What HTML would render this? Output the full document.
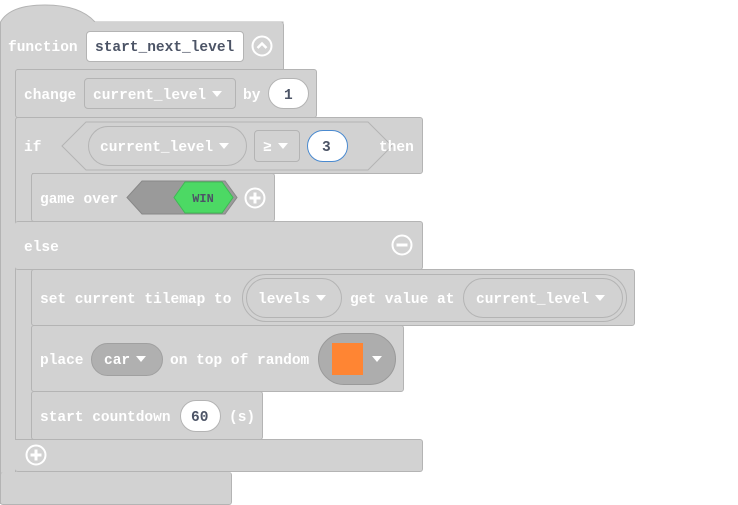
<!DOCTYPE html><html><head><style>
body{margin:0;width:738px;height:504px;background:#fff;position:relative;overflow:hidden;font-family:"Liberation Mono",monospace;font-weight:bold;font-size:14.5px}
.b{position:absolute;background:#d2d2d2;border:1px solid #b4b4b4;box-sizing:border-box;border-radius:3px}
.t{position:absolute;color:#fff;line-height:16px;white-space:pre;margin-top:2px}
.d{color:#4c5466}
.o{position:absolute;box-sizing:border-box;border:1px solid #b4b4b4;border-radius:20px}
.w{background:#fff}
.ar{display:inline-block;width:0;height:0;border-left:5px solid transparent;border-right:5px solid transparent;border-top:6px solid #fff;vertical-align:2px;margin-left:6px}
svg{position:absolute}
</style></head><body>
<svg style="left:0;top:0" width="300" height="30"><path d="M0.5 30 V22 Q10 5 45 5 Q80 5 95 22 H283 V30" fill="#d2d2d2" stroke="#b4b4b4"/></svg>
<div class="b" style="left:0;top:22px;width:284px;height:48px;border-top:none;border-radius:0 3px 0 0"></div>
<div class="b" style="left:0;top:60px;width:17px;height:444px;border-right:none;border-top:none;border-radius:0"></div>
<div class="b" style="left:0;top:472px;width:232px;height:33px;border-top:none"></div>
<div class="t" style="left:8px;top:38px">function</div>
<div class="o w" style="left:86px;top:31px;width:158px;height:31px;border-radius:4px"></div>
<div class="t d" style="left:95px;top:38px">start_next_level</div>
<svg style="left:251px;top:35px" width="22" height="22"><circle cx="11" cy="11" r="9.5" fill="none" stroke="#fff" stroke-width="2"/><path d="M6.5 13 L11 8.5 L15.5 13" stroke="#fff" stroke-width="2.5" fill="none"/></svg>

<div class="b" style="left:15px;top:69px;width:302px;height:49px"></div>
<div class="t" style="left:24px;top:86px">change</div>
<div class="o" style="left:84px;top:78px;width:152px;height:31px;border-radius:4px"></div>
<div class="t" style="left:93px;top:86px">current_level<span class="ar"></span></div>
<div class="t" style="left:243px;top:86px">by</div>
<div class="o w" style="left:268px;top:78px;width:41px;height:31px"></div>
<div class="t d" style="left:284px;top:86px">1</div>

<div class="b" style="left:15px;top:117px;width:408px;height:57px"></div>
<div class="b" style="left:15px;top:170px;width:17px;height:302px;border-radius:0;border-top:none;border-bottom:none;border-right:none"></div>
<div class="t" style="left:24px;top:138px">if</div>
<svg style="left:60px;top:120px" width="340" height="52"><path d="M26 2 H308 L332 26 L308 50 H26 L2 26 Z" fill="#d2d2d2" stroke="#b4b4b4"/></svg>
<div class="o" style="left:88px;top:126px;width:159px;height:40px"></div>
<div class="t" style="left:100px;top:138px">current_level<span class="ar"></span></div>
<div class="o" style="left:254px;top:130px;width:46px;height:32px;border-radius:4px"></div>
<div class="t" style="left:263px;top:138px">≥<span class="ar"></span></div>
<div class="o w" style="left:307px;top:130px;width:41px;height:32px;border-color:#4a8ad0"></div>
<div class="t d" style="left:322px;top:138px">3</div>
<div class="t" style="left:379px;top:138px">then</div>

<div class="b" style="left:31px;top:173px;width:244px;height:49px"></div>
<div class="t" style="left:40px;top:190px">game over</div>
<svg style="left:125px;top:180px" width="115" height="36"><path d="M17 1 H100 L112 17.5 L100 34 H17 L2 17.5 Z" fill="#9a9a9a" stroke="#888"/><path d="M60 2 H97 L108 17.5 L97 33 H60 L49 17.5 Z" fill="#4cd964" stroke="#3fb855"/><text x="78" y="22" text-anchor="middle" font-family="Liberation Mono" font-size="12" fill="#4c5466">WIN</text></svg>
<svg style="left:244px;top:187px" width="22" height="22"><circle cx="11" cy="11" r="9.5" fill="none" stroke="#fff" stroke-width="2"/><path d="M11 5.5 V16.5 M5.5 11 H16.5" stroke="#fff" stroke-width="3"/></svg>

<div class="b" style="left:15px;top:221px;width:408px;height:49px;border-left:none"></div>
<div class="t" style="left:24px;top:238px">else</div>
<svg style="left:391px;top:234px" width="22" height="22"><circle cx="11" cy="11" r="9.5" fill="none" stroke="#fff" stroke-width="2"/><path d="M5.5 11 H16.5" stroke="#fff" stroke-width="3"/></svg>

<div class="b" style="left:31px;top:269px;width:604px;height:57px"></div>
<div class="t" style="left:40px;top:290px">set current tilemap to</div>
<div class="o" style="left:242px;top:274px;width:385px;height:48px;border-radius:24px"></div>
<div class="o" style="left:246px;top:278px;width:96px;height:40px"></div>
<div class="t" style="left:258px;top:290px">levels<span class="ar"></span></div>
<div class="t" style="left:350px;top:290px">get value at</div>
<div class="o" style="left:463px;top:278px;width:160px;height:40px"></div>
<div class="t" style="left:476px;top:290px">current_level<span class="ar"></span></div>

<div class="b" style="left:31px;top:325px;width:373px;height:67px"></div>
<div class="t" style="left:40px;top:351px">place</div>
<div class="o" style="left:91px;top:343px;width:72px;height:33px;background:#b0b0b0;border-color:#a0a0a0"></div>
<div class="t" style="left:104px;top:351px">car<span class="ar"></span></div>
<div class="t" style="left:170px;top:351px">on top of random</div>
<div class="o" style="left:318px;top:333px;width:78px;height:52px;border-radius:26px;background:#adadad;border-color:#9a9a9a"></div>
<div style="position:absolute;left:332px;top:343px;width:31px;height:32px;background:#ff8533"></div>
<div class="t" style="left:366px;top:351px"><span class="ar"></span></div>

<div class="b" style="left:31px;top:391px;width:232px;height:49px"></div>
<div class="t" style="left:40px;top:408px">start countdown</div>
<div class="o w" style="left:180px;top:400px;width:41px;height:32px"></div>
<div class="t d" style="left:191px;top:408px">60</div>
<div class="t" style="left:229px;top:408px">(s)</div>

<div class="b" style="left:15px;top:439px;width:408px;height:33px;border-left:none;border-top-left-radius:0"></div>
<svg style="left:25px;top:444px" width="22" height="22"><circle cx="11" cy="11" r="9.5" fill="none" stroke="#fff" stroke-width="2"/><path d="M11 5.5 V16.5 M5.5 11 H16.5" stroke="#fff" stroke-width="3"/></svg>
</body></html>
